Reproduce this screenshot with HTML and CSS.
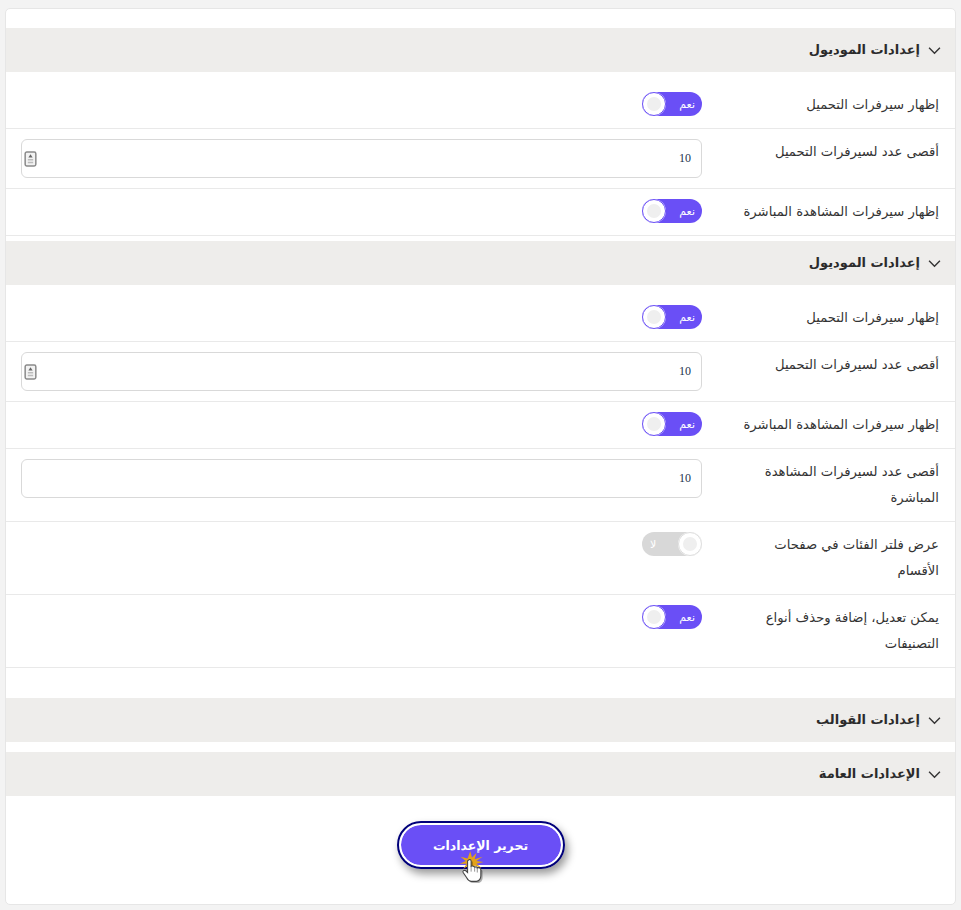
FILE: index.html
```html
<!DOCTYPE html>
<html lang="ar" dir="rtl">
<head>
    <meta charset="UTF-8">
    <meta name="viewport" content="width=device-width, initial-scale=1.0">
    <title>الإعدادات</title>
    <link rel="stylesheet" href="styles.css">
</head>
<body>
    <div class="card">
        <div class="section-head first">
            <svg class="chevron" viewBox="0 0 12 8"><path d="M1 1.5l5 5 5-5"/></svg>
            <span>إعدادات الموديول</span>
        </div>
        <div class="section-body">
            <div class="row">
                <div class="row-label">إظهار سيرفرات التحميل</div>
                <div class="row-field"><div class="toggle on"><span class="toggle-text">نعم</span><span class="knob"></span></div></div>
            </div>
            <div class="row">
                <div class="row-label">أقصى عدد لسيرفرات التحميل</div>
                <div class="row-field">
                    <div class="text-input"><span>10</span>
                        <svg class="input-icon" viewBox="0 0 12 15"><rect x="1" y="1" width="10" height="13" rx="1.5"/><path class="arrow" d="M6 3l2 3H4z"/><path class="bar" d="M3.5 7.5h5v1.5h-5zM3.5 10h5v1.5h-5z"/></svg>
                    </div>
                </div>
            </div>
            <div class="row">
                <div class="row-label">إظهار سيرفرات المشاهدة المباشرة</div>
                <div class="row-field"><div class="toggle on"><span class="toggle-text">نعم</span><span class="knob"></span></div></div>
            </div>
        </div>

        <div class="section-head second">
            <svg class="chevron" viewBox="0 0 12 8"><path d="M1 1.5l5 5 5-5"/></svg>
            <span>إعدادات الموديول</span>
        </div>
        <div class="section-body">
            <div class="row">
                <div class="row-label">إظهار سيرفرات التحميل</div>
                <div class="row-field"><div class="toggle on"><span class="toggle-text">نعم</span><span class="knob"></span></div></div>
            </div>
            <div class="row">
                <div class="row-label">أقصى عدد لسيرفرات التحميل</div>
                <div class="row-field">
                    <div class="text-input"><span>10</span>
                        <svg class="input-icon" viewBox="0 0 12 15"><rect x="1" y="1" width="10" height="13" rx="1.5"/><path class="arrow" d="M6 3l2 3H4z"/><path class="bar" d="M3.5 7.5h5v1.5h-5zM3.5 10h5v1.5h-5z"/></svg>
                    </div>
                </div>
            </div>
            <div class="row">
                <div class="row-label">إظهار سيرفرات المشاهدة المباشرة</div>
                <div class="row-field"><div class="toggle on"><span class="toggle-text">نعم</span><span class="knob"></span></div></div>
            </div>
            <div class="row">
                <div class="row-label">أقصى عدد لسيرفرات المشاهدة المباشرة</div>
                <div class="row-field"><div class="text-input"><span>10</span></div></div>
            </div>
            <div class="row">
                <div class="row-label">عرض فلتر الفئات في صفحات الأقسام</div>
                <div class="row-field"><div class="toggle off"><span class="knob"></span><span class="toggle-text">لا</span></div></div>
            </div>
            <div class="row">
                <div class="row-label">يمكن تعديل، إضافة وحذف أنواع التصنيفات</div>
                <div class="row-field"><div class="toggle on"><span class="toggle-text">نعم</span><span class="knob"></span></div></div>
            </div>
        </div>

        <div class="section-head third">
            <svg class="chevron" viewBox="0 0 12 8"><path d="M1 1.5l5 5 5-5"/></svg>
            <span>إعدادات القوالب</span>
        </div>
        <div class="section-head fourth">
            <svg class="chevron" viewBox="0 0 12 8"><path d="M1 1.5l5 5 5-5"/></svg>
            <span>الإعدادات العامة</span>
        </div>

        <div class="actions">
            <div class="submit-wrap">
                <button class="submit">تحرير الإعدادات</button>
                <svg class="click-cursor" viewBox="0 0 34 40">
                    <path class="burst" d="M15 0l2 7 5-5-2 7 9-3-7 5 8 1-8 2 6 5-8-3 1 7-4-6-3 6-1-7-6 4 4-6-8 0 7-3-6-5 8 2z"/>
                    <path class="shadow" d="M15 12c1-1 3-1 3 1v6c2-1 3 0 4 1 2-1 3 0 3 1 2-1 4 0 4 2v7c0 3-2 6-5 6h-6c-3 0-4-2-5-4l-4-6c-1-2 1-3 3-2l2 2v-13c0-1 0-1 1-1z"/>
                    <path class="hand" d="M13 10c1-1 3-1 3 1v6c2-1 3 0 4 1 2-1 3 0 3 1 2-1 4 0 4 2v7c0 3-2 6-5 6h-6c-3 0-4-2-5-4l-4-6c-1-2 1-3 3-2l2 2v-13c0-1 0-1 1-1z"/>
                    <path class="finger-lines" d="M16 17v6M20 18v5M23 19v5"/>
                </svg>
            </div>
        </div>
    </div>
</body>
</html>
```

FILE: styles.css
```css
* {
    box-sizing: border-box;
}
body {
    margin: 0;
    padding: 8px 5px 5px;
    background-color: #f3f3f3;
    font-family: 'DejaVu Sans', 'Noto Sans', sans-serif;
    color: #333;
}
.card {
    background-color: #fff;
    border: 1px solid #e6e6e6;
    border-radius: 5px;
    height: 897px;
    padding-top: 19px;
}
.section-head {
    display: flex;
    align-items: center;
    gap: 8px;
    height: 44px;
    padding: 0 14px 2px;
    background-color: #eeedeb;
    font-size: 13px;
    font-weight: bold;
    color: #2b2b2b;
}
.section-head.second {
    margin-top: 5px;
}
.section-head.third {
    margin-top: 30px;
}
.section-head.fourth {
    margin-top: 10px;
}
.chevron {
    width: 13px;
    height: 9px;
    flex: none;
    margin-top: 2px;
}
.chevron path {
    fill: none;
    stroke: #333;
    stroke-width: 1.3;
}
.section-body {
    padding-top: 10px;
}
.row {
    display: flex;
    padding: 10px 15px;
    border-bottom: 1px solid #e9e9e9;
}
.row-label {
    width: 222px;
    flex: none;
    padding-left: 17px;
    margin-right: 1px;
    font-size: 13.2px;
    line-height: 26px;
    color: #333;
}
.row-field {
    margin-right: 15px;
    width: 681px;
}
.toggle {
    display: flex;
    align-items: center;
    justify-content: space-between;
    width: 60px;
    height: 24px;
    border-radius: 12px;
    padding: 0 7px 0 0;
    font-size: 11px;
    font-weight: 500;
    color: #fff;
}
.toggle.on {
    background-color: #6a4ff6;
}
.toggle.off {
    background-color: #d8d8d8;
    padding: 0 0 0 8px;
}
.knob {
    display: block;
    width: 24px;
    height: 24px;
    border-radius: 50%;
    border: 5px solid #fff;
    background-color: #efefef;
}
.toggle.on .knob {
    outline: 1px solid #6a4ff6;
    outline-offset: -1px;
}
.toggle.off .knob {
    outline: 1px solid #dedede;
    outline-offset: -1px;
}
.text-input {
    display: flex;
    align-items: center;
    justify-content: space-between;
    height: 39px;
    padding: 0 10px 0 2px;
    border: 1px solid #d9d9d9;
    border-radius: 6px;
    font-family: 'Liberation Serif', serif;
    font-size: 12px;
    color: #23324d;
}
.input-icon {
    width: 13px;
    height: 16px;
}
.input-icon rect {
    fill: #f2f2f2;
    stroke: #8a8a8a;
    stroke-width: 1.4;
}
.input-icon .arrow {
    fill: #666;
}
.input-icon .bar {
    fill: #bbb;
}
.actions {
    display: flex;
    justify-content: center;
    margin-top: 25px;
}
.submit-wrap {
    position: relative;
}
.submit {
    display: block;
    width: 168px;
    height: 48px;
    border-radius: 24px;
    border: 4px solid #fff;
    outline: 2px solid #00007a;
    outline-offset: -2px;
    box-shadow: 3px 5px 8px rgba(0, 0, 0, 0.4);
    background-color: #6a4ff6;
    background-clip: padding-box;
    font-family: inherit;
    font-size: 12.5px;
    font-weight: bold;
    color: #fff;
}
.click-cursor {
    position: absolute;
    left: 60px;
    top: 30px;
    width: 30px;
    height: 36px;
}
.burst {
    fill: #e3a21a;
}
.shadow {
    fill: rgba(0, 0, 0, 0.3);
}
.hand {
    fill: #fff;
    stroke: #444;
    stroke-width: 1.2;
}
.finger-lines {
    fill: none;
    stroke: #666;
    stroke-width: 0.8;
}
```
